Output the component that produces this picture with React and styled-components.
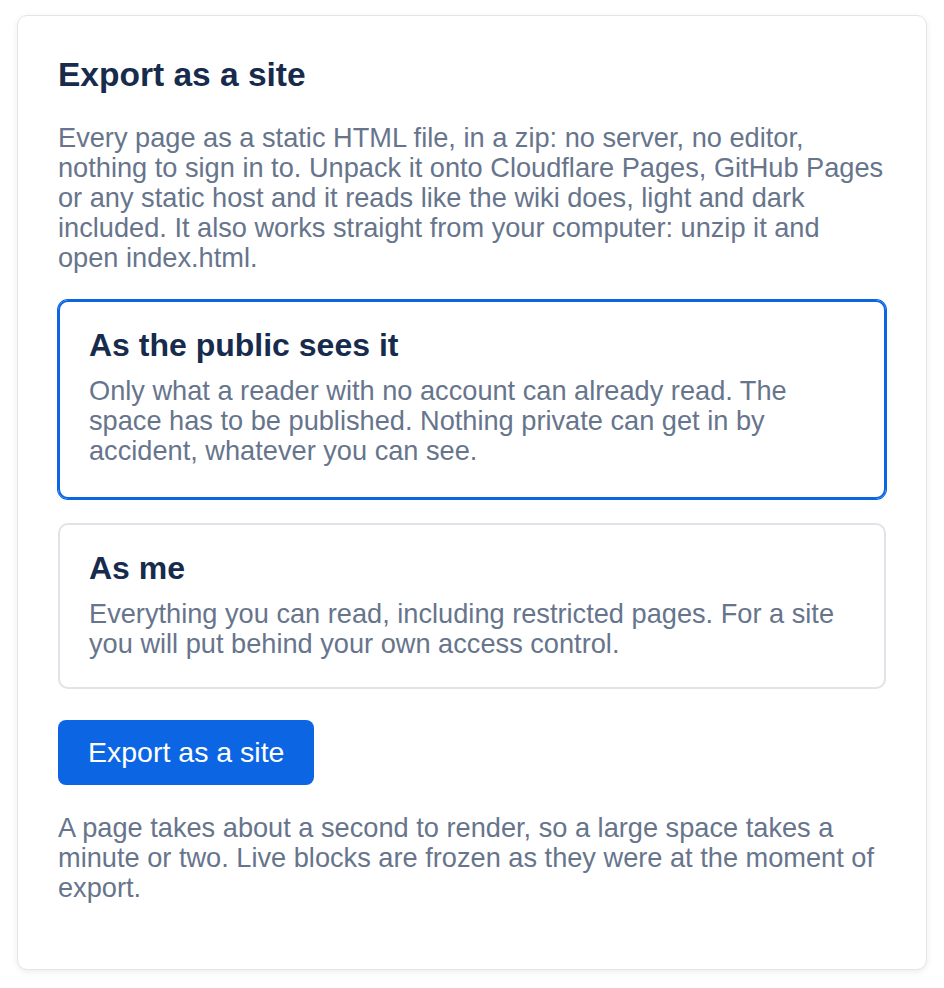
import React, { useState } from 'react';
import styled, { createGlobalStyle } from 'styled-components';

const GlobalStyle = createGlobalStyle`
    * {
        box-sizing: border-box;
    }

    body {
        margin: 0;
        background: #fff;
        font-family: "Liberation Sans", Arial, sans-serif;
    }
`;

const modes = [
    {
        id: 'public',
        title: 'As the public sees it',
        text: 'Only what a reader with no account can already read. The space has to be published. Nothing private can get in by accident, whatever you can see.',
    },
    {
        id: 'me',
        title: 'As me',
        text: 'Everything you can read, including restricted pages. For a site you will put behind your own access control.',
    },
];

function App() {

    const [mode, setMode] = useState('public');

    return (
        <Page>
            <GlobalStyle />

            <Panel>
                <Title>Export as a site</Title>

                <Intro>
                    Every page as a static HTML file, in a zip: no server, no editor, nothing to sign in to. Unpack it onto Cloudflare Pages, GitHub Pages or any static host and it reads like the wiki does, light and dark included. It also works straight from your computer: unzip it and open index.html.
                </Intro>

                <Options>
                    {modes.map(m => (
                        <Option key={m.id} selected={mode === m.id} onClick={() => setMode(m.id)}>
                            <OptionTitle>{m.title}</OptionTitle>
                            <OptionText>{m.text}</OptionText>
                        </Option>
                    ))}
                </Options>

                <ExportButton>Export as a site</ExportButton>

                <Note>
                    A page takes about a second to render, so a large space takes a minute or two. Live blocks are frozen as they were at the moment of export.
                </Note>
            </Panel>
        </Page>
    )
}

export default App;

const Page = styled.div`
    padding: 15px 17px 18px;
`;

const Panel = styled.div`
    background: #fff;
    border: 1px solid #e4e4ea;
    border-radius: 10px;
    box-shadow: 0 2px 6px rgba(30, 31, 60, 0.08);
    padding: 41px 40px 66px;
    color: #172b4d;
`;

const Title = styled.h2`
    margin: 0;
    font-size: 33.5px;
    line-height: 36px;
    font-weight: 700;
    color: #172b4d;
`;

const Intro = styled.p`
    margin: 30px 0 0;
    font-size: 27.2px;
    line-height: 30px;
    color: #67758c;
`;

const Options = styled.div`
    display: flex;
    flex-direction: column;
    gap: 24px;
    margin-top: 27px;
`;

const Option = styled.div`
    border: 2px solid ${props => props.selected ? "#0c66e4" : "#e2e2e8"};
    box-shadow: ${props => props.selected ? "0 0 0 1px #0c66e4" : "none"};
    border-radius: 10px;
    padding: ${props => props.selected ? "28px 29px 31px" : "28px 29px 28px"};
    cursor: pointer;
`;

const OptionTitle = styled.div`
    font-size: 32px;
    line-height: 30px;
    font-weight: 700;
    color: #172b4d;
`;

const OptionText = styled.p`
    margin: 16px 0 0;
    font-size: 27.2px;
    line-height: 30px;
    color: #67758c;
`;

const ExportButton = styled.button`
    display: block;
    margin-top: 31px;
    height: 65px;
    padding: 0 30px;
    border: none;
    border-radius: 8px;
    background: #0c66e4;
    color: #fff;
    font-family: inherit;
    font-size: 28.5px;
    cursor: pointer;
`;

const Note = styled.p`
    margin: 28px 0 0;
    font-size: 27.2px;
    line-height: 30px;
    color: #67758c;
`;
